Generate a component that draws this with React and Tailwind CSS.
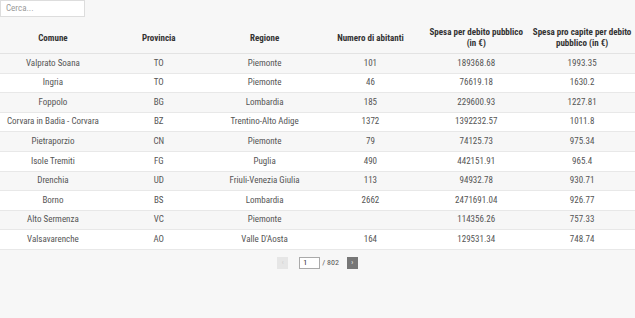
import React from "react";

const rows = [
  ["Valprato Soana", "TO", "Piemonte", "101", "189368.68", "1993.35"],
  ["Ingria", "TO", "Piemonte", "46", "76619.18", "1630.2"],
  ["Foppolo", "BG", "Lombardia", "185", "229600.93", "1227.81"],
  ["Corvara in Badia - Corvara", "BZ", "Trentino-Alto Adige", "1372", "1392232.57", "1011.8"],
  ["Pietraporzio", "CN", "Piemonte", "79", "74125.73", "975.34"],
  ["Isole Tremiti", "FG", "Puglia", "490", "442151.91", "965.4"],
  ["Drenchia", "UD", "Friuli-Venezia Giulia", "113", "94932.78", "930.71"],
  ["Borno", "BS", "Lombardia", "2662", "2471691.04", "926.77"],
  ["Alto Sermenza", "VC", "Piemonte", "", "114356.26", "757.33"],
  ["Valsavarenche", "AO", "Valle D'Aosta", "164", "129531.34", "748.74"],
];

const headers = [
  "Comune",
  "Provincia",
  "Regione",
  "Numero di abitanti",
  "Spesa per debito pubblico (in €)",
  "Spesa pro capite per debito pubblico (in €)",
];

export default function App() {
  return (
    <div
      className="w-[635px] h-[318px] bg-[#f7f7f7] text-[#555] overflow-hidden"
      style={{ fontFamily: '"Roboto Condensed", "Liberation Sans Narrow", "DejaVu Sans Condensed", Roboto, sans-serif' }}
    >
      <div className="h-[17px] w-[85px] bg-white border border-[#ddd] flex items-center pl-[5px] text-[9px] text-[#999]">
        Cerca...
      </div>
      <div className="mt-[6px]">
        <div className="grid grid-cols-6 h-[31px] items-center border-b border-[#e3e3e3] text-[9px] font-bold text-[#333] leading-[11px]">
          {headers.map((h, i) => (
            <div key={i} className="text-center px-[2px]">{h}</div>
          ))}
        </div>
        {rows.map((r, i) => (
          <div
            key={i}
            className={`grid grid-cols-6 h-[19.6px] items-center border-b border-[#e8e8e8] text-[9px] ${i % 2 === 0 ? "bg-[#f7f7f7]" : "bg-white"}`}
          >
            {r.map((c, j) => (
              <div key={j} className="text-center whitespace-nowrap">{c}</div>
            ))}
          </div>
        ))}
      </div>
      <div className="flex items-center justify-center mt-[7px] text-[8px] text-[#555]">
        <div className="w-[11px] h-[12px] bg-[#e6e6e6] flex items-center justify-center text-[#ccc] text-[7px]">‹</div>
        <div className="ml-[11px] w-[21px] h-[12px] bg-white border border-[#aaa] flex items-center pl-[3px] text-[#333]">1</div>
        <div className="ml-[2px]">/ 802</div>
        <div className="ml-[8px] w-[11px] h-[12px] bg-[#777] flex items-center justify-center text-white text-[7px]">›</div>
      </div>
    </div>
  );
}
